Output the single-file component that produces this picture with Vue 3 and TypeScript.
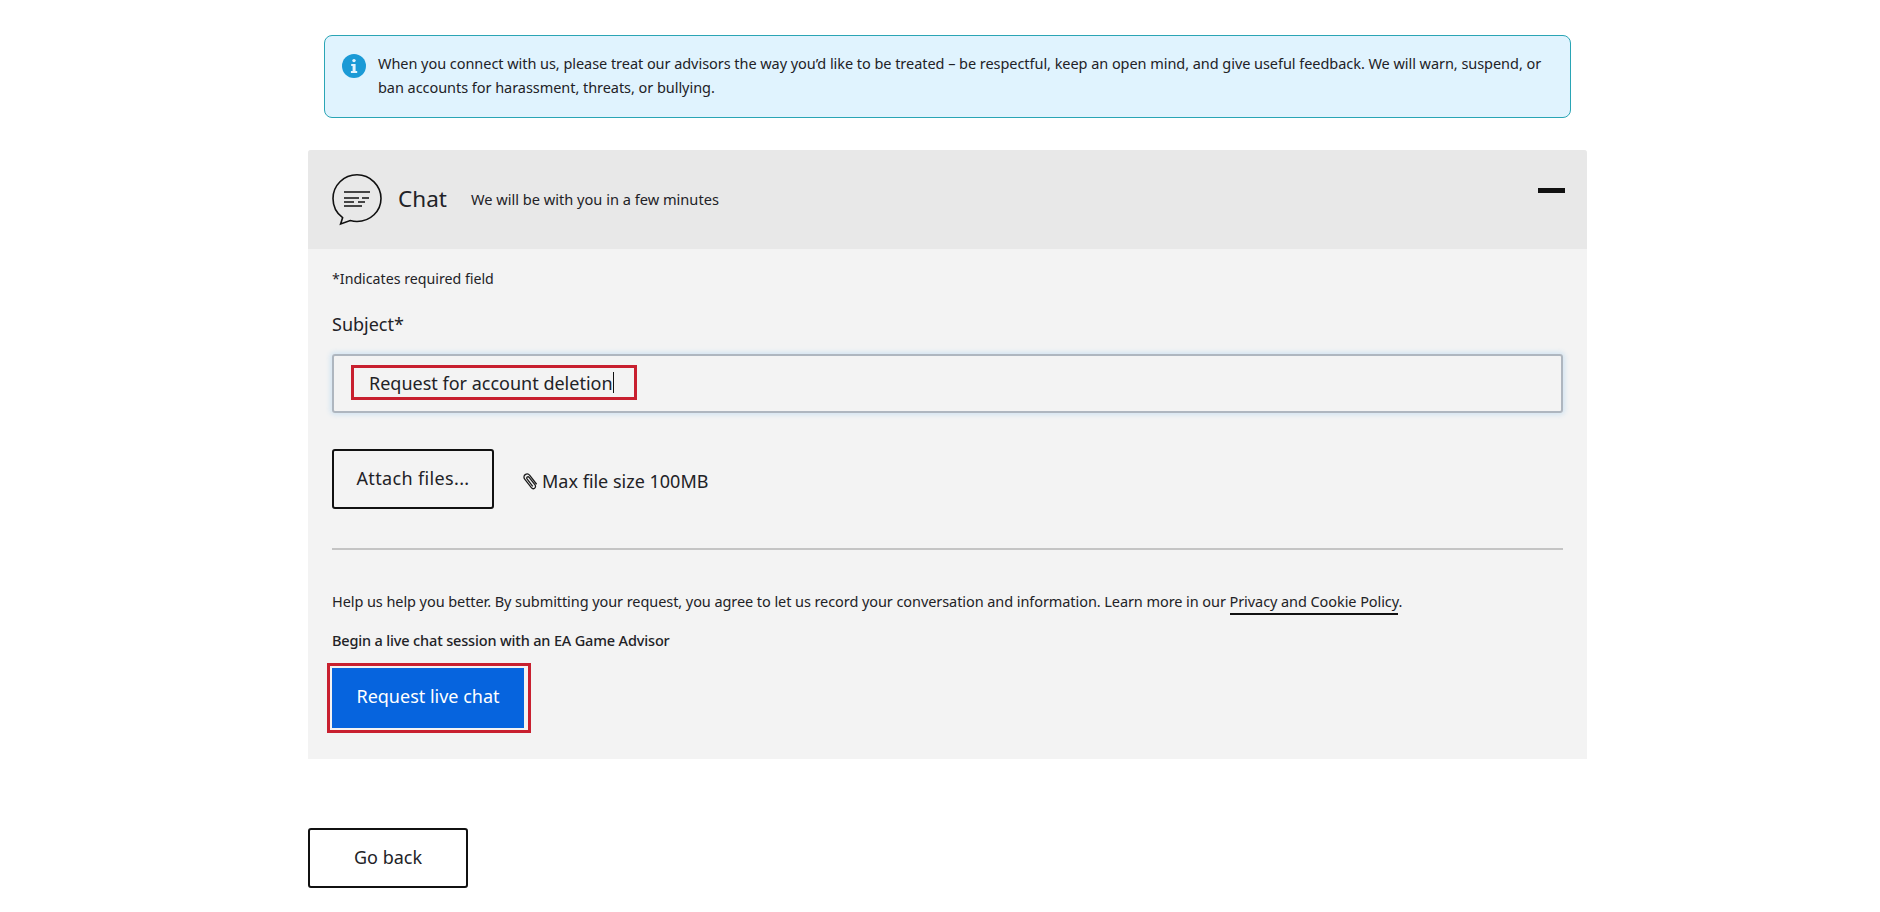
<script setup lang="ts">
const notice: string =
  "When you connect with us, please treat our advisors the way you’d like to be treated – be respectful, keep an open mind, and give useful feedback. We will warn, suspend, or ban accounts for harassment, threats, or bullying.";
</script>

<template>
  <div class="page">
    <div class="alert">
      <svg class="info" viewBox="0 0 24 24" width="24" height="24">
        <circle cx="12" cy="12" r="12" fill="#1b9ad6" />
        <circle cx="12" cy="6.6" r="1.7" fill="#e3f4ff" />
        <path d="M9.2 10h4.400v7h1.600v1.900H8.900V17h1.700v-5.100H9.200z" fill="#e3f4ff" />
      </svg>
      <p>{{ notice }}</p>
    </div>

    <section class="panel">
      <header class="panel-head">
        <svg class="chat-icon" viewBox="0 0 50 52" width="50" height="52" fill="none" stroke="#111" stroke-width="1.600">
          <path d="M25 .8C11.700.8 1 11.300 1 24.500c0 7.900 3.700 14.800 9.600 19.200L8.600 50l9.600-3.500c2.200.6 4.500 1 6.800 1 13.300 0 24-10.300 24-23S38.300.8 25 .8z" />
          <path d="M12 18h26M12 24h15M30 24h7M12 28h10M26 28h7M12 32h18" stroke-width="1.500" />
        </svg>
        <h2>Chat</h2>
        <span class="eta">We will be with you in a few minutes</span>
        <span class="collapse"></span>
      </header>

      <div class="panel-body">
        <p class="required">*Indicates required field</p>
        <label class="subject" for="subject">Subject*</label>
        <div class="field">
          <span class="value">Request for account deletion</span><span class="caret"></span>
          <span class="mark mark-input"></span>
        </div>
        <div class="attach-row">
          <button class="btn outline" type="button">Attach files...</button>
          <span class="max">
            <svg viewBox="0 0 16 18" width="17" height="19" fill="none" stroke="#1a1a1a" stroke-width="1.200">
              <path d="M13.800 11.600 7.300 3.200C6.200 1.800 4.400 1.500 3 2.500s-1.600 2.900-.5 4.300l6.300 8.100c.8 1 2.100 1.200 3.100.5s1.100-2.100.4-3.100L6.700 5.100c-.5-.6-1.200-.7-1.800-.3s-.6 1.200-.2 1.800l5.400 7" />
            </svg>
            Max file size 100MB
          </span>
        </div>
        <hr />
        <p class="help">
          Help us help you better. By submitting your request, you agree to let us record your conversation and information. Learn more in our
          <a href="#">Privacy and Cookie Policy</a>.
        </p>
        <p class="begin">Begin a live chat session with an EA Game Advisor</p>
        <div class="cta-wrap">
          <button class="btn primary" type="button">Request live chat</button>
          <span class="mark mark-cta"></span>
        </div>
      </div>
    </section>

    <button class="btn outline back" type="button">Go back</button>
  </div>
</template>

<style>
html,
body {
  margin: 0;
  background: #fff;
}
</style>

<style scoped>
.page {
  width: 1279px;
  margin-left: 308px;
  padding-top: 35px;
  height: 877px;
  font-family: "Noto Sans", "Open Sans", sans-serif;
  color: #222226;
}
.alert {
  box-sizing: border-box;
  margin: 0 16px;
  height: 83px;
  display: flex;
  gap: 12px;
  padding: 18px 20px 0 17px;
  background: #e0f3fe;
  border: 1px solid #2aa5b5;
  border-radius: 8px;
}
.info {
  flex: none;
}
.alert p {
  margin: 0;
  font-size: 14.5px;
  letter-spacing: -0.05px;
  line-height: 24px;
  position: relative;
  top: -3px;
}
.panel {
  margin-top: 32px;
  background: #f3f3f3;
  border-radius: 3px 3px 0 0;
}
.panel-head {
  height: 99px;
  box-sizing: border-box;
  padding: 24px 24px 0;
  display: flex;
  align-items: flex-start;
  background: #e8e8e8;
  border-radius: 3px 3px 0 0;
  position: relative;
}
.chat-icon {
  flex: none;
}
.panel-head h2 {
  margin: 0 0 0 16px;
  font-size: 22.5px;
  line-height: 50px;
  font-weight: 400;
}
.eta {
  margin-left: 24px;
  font-size: 14.6px;
  line-height: 50px;
}
.collapse {
  position: absolute;
  right: 22px;
  top: 38px;
  width: 27px;
  height: 5px;
  background: #111;
}
.panel-body {
  padding: 19px 24px 31px;
}
.required {
  margin: 0;
  font-size: 14.2px;
  line-height: 22px;
}
.subject {
  display: block;
  margin-top: 20px;
  font-size: 18px;
  line-height: 28px;
}
.field {
  position: relative;
  box-sizing: border-box;
  margin-top: 16px;
  height: 59px;
  display: flex;
  align-items: center;
  padding: 0 0 2px 35px;
  border: 2px solid #aeb6bf;
  border-radius: 3px;
  box-shadow: 0 0 5px 2px #d3e4f1;
  font-size: 18px;
}
.caret {
  width: 1px;
  height: 21px;
  background: #111;
}
.mark {
  position: absolute;
  box-sizing: border-box;
  border: 3px solid #c8202f;
  pointer-events: none;
}
.mark-input {
  left: 17px;
  top: 9px;
  width: 286px;
  height: 35px;
}
.attach-row {
  display: flex;
  align-items: center;
  margin-top: 36px;
}
.btn {
  box-sizing: border-box;
  height: 60px;
  font-family: inherit;
  font-size: 18px;
  border-radius: 3px;
  cursor: pointer;
}
.outline {
  background: transparent;
  border: 2px solid #111;
  color: #222226;
}
.attach-row .btn {
  width: 162px;
  padding: 0 0 3px;
  letter-spacing: 0.35px;
}
.max {
  display: inline-flex;
  align-items: center;
  gap: 3px;
  margin: 4px 0 0 28px;
  font-size: 18px;
}
hr {
  margin: 39px 0 0;
  border: 0;
  height: 2px;
  background: #c4c4c4;
}
.help {
  margin: 39px 0 0;
  font-size: 14.5px;
  letter-spacing: -0.075px;
  line-height: 24px;
}
.help a {
  color: inherit;
  text-decoration: none;
  border-bottom: 2px solid #111;
  padding-bottom: 2px;
}
.begin {
  margin: 15px 0 0;
  font-size: 14.5px;
  letter-spacing: -0.16px;
  line-height: 24px;
  font-weight: 500;
}
.cta-wrap {
  position: relative;
  width: 192px;
  margin-top: 16px;
}
.primary {
  display: block;
  width: 192px;
  height: 60px;
  padding: 0 0 4px;
  background: #0664de;
  border: 0;
  border-radius: 0;
  color: #fff;
}
.mark-cta {
  left: -5px;
  top: -5px;
  width: 204px;
  height: 70px;
}
.back {
  display: block;
  width: 160px;
  margin-top: 69px;
  padding: 0 0 2px;
  background: #fff;
}
</style>
